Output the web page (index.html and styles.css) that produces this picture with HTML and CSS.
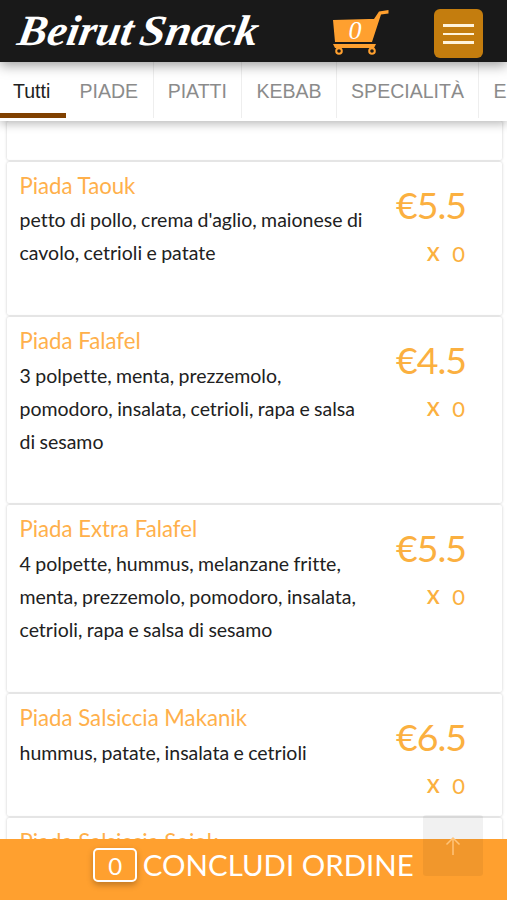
FILE: index.html
```
<!DOCTYPE html>
<html lang="it">
<head>
    <meta charset="UTF-8">
    <meta name="viewport" content="width=device-width, initial-scale=1">
    <title>Beirut Snack</title>
    <link rel="stylesheet" href="styles.css">
</head>
<body>
    <header class="header">
        <svg class="logo" width="250" height="56" viewBox="0 0 250 56">
            <g transform="skewX(-10)">
                <text x="16" y="45" textLength="115" lengthAdjust="spacingAndGlyphs">Beirut</text>
                <text x="138" y="45" textLength="118" lengthAdjust="spacingAndGlyphs">Snack</text>
            </g>
        </svg>
        <svg class="cart" width="60" height="48" viewBox="0 0 60 48">
            <path class="cart-body" d="M2 11 L38 10 H43 L48 2.5 L57.5 1 V4.5 L50 5.5 L41 33 H4 Z"/>
            <path class="cart-base" d="M2 35 H45 L43 39 H4 Z"/>
            <circle class="cart-wheel" cx="8" cy="42" r="2.8"/>
            <circle class="cart-wheel" cx="41" cy="42" r="2.8"/>
            <text class="cart-count" x="24" y="30" text-anchor="middle">0</text>
        </svg>
        <button class="menu-button" aria-label="Menu">
            <span></span>
            <span></span>
            <span></span>
        </button>
    </header>

    <nav class="tabs">
        <a class="tab active">Tutti</a>
        <a class="tab">PIADE</a>
        <a class="tab">PIATTI</a>
        <a class="tab">KEBAB</a>
        <a class="tab">SPECIALITÀ</a>
        <a class="tab">E</a>
    </nav>

    <main class="list">
        <div class="card card-previous"></div>
        <div class="card">
            <div class="info">
                <h2>Piada Taouk</h2>
                <p>petto di pollo, crema d'aglio, maionese di cavolo, cetrioli e patate</p>
            </div>
            <div class="order">
                <div class="price">€5.5</div>
                <div class="quantity"><b>x</b><span>0</span></div>
            </div>
        </div>
        <div class="card">
            <div class="info">
                <h2>Piada Falafel</h2>
                <p>3 polpette, menta, prezzemolo, pomodoro, insalata, cetrioli, rapa e salsa di sesamo</p>
            </div>
            <div class="order">
                <div class="price">€4.5</div>
                <div class="quantity"><b>x</b><span>0</span></div>
            </div>
        </div>
        <div class="card">
            <div class="info">
                <h2>Piada Extra Falafel</h2>
                <p>4 polpette, hummus, melanzane fritte, menta, prezzemolo, pomodoro, insalata, cetrioli, rapa e salsa di sesamo</p>
            </div>
            <div class="order">
                <div class="price">€5.5</div>
                <div class="quantity"><b>x</b><span>0</span></div>
            </div>
        </div>
        <div class="card">
            <div class="info">
                <h2>Piada Salsiccia Makanik</h2>
                <p>hummus, patate, insalata e cetrioli</p>
            </div>
            <div class="order">
                <div class="price">€6.5</div>
                <div class="quantity"><b>x</b><span>0</span></div>
            </div>
        </div>
        <div class="card">
            <div class="info">
                <h2>Piada Salsiccia Sojok</h2>
            </div>
        </div>
    </main>

    <footer class="checkout">
        <span class="checkout-count">0</span>
        <span class="checkout-label">CONCLUDI ORDINE</span>
    </footer>

    <button class="to-top" aria-label="Torna su">
        <svg width="16" height="20" viewBox="0 0 16 20">
            <path d="M8 19 V2 M1.5 8.5 L8 2 L14.5 8.5"/>
        </svg>
    </button>
</body>
</html>
```
FILE: styles.css
```
* {
    margin: 0;
    padding: 0;
    box-sizing: border-box;
}

body {
    position: relative;
    display: flex;
    flex-direction: column;
    height: 100vh;
    overflow: hidden;
    font-family: Lato, sans-serif;
    font-variant-ligatures: none;
    background: #fff;
    color: #212121;
}

.header {
    display: flex;
    align-items: flex-start;
    flex-shrink: 0;
    height: 62px;
    padding-right: 24px;
    background: #191919;
    box-shadow: 0 3px 12px rgba(0,0,0,0.4);
    z-index: 3;
}

.logo {
    margin-left: 8px;
    overflow: visible;
}

.logo text {
    font-family: "Liberation Serif", serif;
    font-size: 43px;
    font-weight: bold;
    font-style: italic;
    fill: #fff;
}

.cart {
    margin: 9px 0 0 73px;
}

.cart-body, .cart-base {
    fill: #ffa02f;
}

.cart-wheel {
    fill: none;
    stroke: #ffa02f;
    stroke-width: 2;
}

.cart-count {
    font-family: "Liberation Serif", serif;
    font-size: 26px;
    font-style: italic;
    fill: #fff;
}

.menu-button {
    display: flex;
    flex-direction: column;
    align-items: center;
    gap: 6px;
    width: 49px;
    height: 49px;
    margin: 9px 0 0 auto;
    padding-top: 15px;
    background: #c47d0e;
    border: none;
    border-radius: 6px;
}

.menu-button span {
    width: 31px;
    height: 2.5px;
    background: #fff3da;
}

.tabs {
    display: flex;
    flex-shrink: 0;
    height: 59px;
    background: #fff;
    box-shadow: 0 3px 9px rgba(0,0,0,0.27);
    z-index: 2;
}

.tab {
    flex-shrink: 0;
    height: 56px;
    padding: 17px 14.5px 0 14px;
    border-right: 1px solid #eee;
    font-family: "Liberation Sans", sans-serif;
    font-size: 19.55px;
    line-height: 25px;
    color: #8b8b8b;
}

.tab:last-child {
    border-right: none;
    padding-right: 0;
}

.tab.active {
    width: 65.5px;
    padding-left: 13px;
    padding-right: 0;
    border-right: none;
    border-bottom: 5px solid #804000;
    color: #212121;
}

.list {
    flex: 1;
    min-height: 0;
    padding: 0 5px 0 7px;
    overflow: hidden;
}

.card {
    display: flex;
    justify-content: space-between;
    min-height: 122.5px;
    margin-bottom: 2px;
    padding: 7px 36px 45.5px 12.5px;
    background: #fff;
    border-radius: 2px;
    box-shadow: 0 0 3px rgba(0,0,0,0.22);
}

.card-previous {
    min-height: 38.5px;
    height: 38.5px;
    padding: 0;
}

.info {
    width: 354px;
}

.info h2 {
    font-size: 22.2px;
    font-weight: normal;
    line-height: 33px;
    color: #ffb04b;
}

.info p {
    padding-top: 1.7px;
    font-size: 19.5px;
    line-height: 33.1px;
    word-spacing: -0.6px;
}

.order {
    text-align: right;
    color: #fbb040;
}

.price {
    padding-top: 11px;
    font-size: 37.5px;
    line-height: 50px;
    letter-spacing: -1px;
}

.quantity {
    display: flex;
    justify-content: flex-end;
    gap: 12.5px;
    height: 0;
    padding-right: 1px;
    font-size: 22px;
    line-height: 47px;
}

.quantity b {
    font-weight: 500;
    font-size: 26px;
    line-height: 43px;
}

.checkout {
    display: flex;
    justify-content: center;
    flex-shrink: 0;
    gap: 6px;
    height: 61px;
    padding-top: 9px;
    background: #ffa02f;
    color: #fff;
    z-index: 1;
}

.checkout-count {
    width: 43.5px;
    height: 34px;
    border: 2px solid #fff;
    border-radius: 5px;
    box-shadow: 0 3px 6px rgba(0,0,0,0.25);
    font-size: 24px;
    line-height: 32px;
    text-align: center;
}

.checkout-label {
    font-size: 29.4px;
    line-height: 33px;
}

/* floats over the list and the order bar */
.to-top {
    position: absolute;
    right: 24px;
    bottom: 24px;
    display: flex;
    align-items: center;
    justify-content: center;
    width: 60px;
    height: 61px;
    background: rgba(0,0,0,0.055);
    border: none;
    border-radius: 3px;
    z-index: 2;
}

.to-top path {
    fill: none;
    stroke: #ffc47a;
    stroke-width: 1.5;
}
```
